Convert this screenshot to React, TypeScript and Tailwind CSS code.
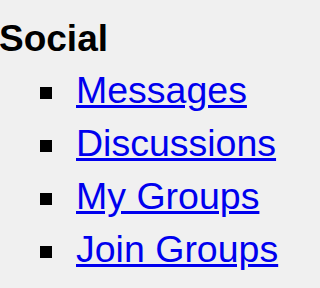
const links = ['Messages', 'Discussions', 'My Groups', 'Join Groups'];

const App = () => {
  return (
    <div className="min-h-[288px] w-full bg-[#f0f0f0] pt-[13px] font-['Liberation_Sans',Arial,sans-serif] text-[37px] text-black">
      <h4 className="-ml-[1px] font-bold leading-[51px]">Social</h4>
      <ul className="pl-[40px]">
        {links.map((label) => (
          <li key={label} className="flex items-start leading-[53px]">
            <span className="mt-[23px] h-[12px] w-[12px] shrink-0 bg-black" />
            <a href="#" className="ml-[24px] text-[37.5px] text-[#0000ee] underline">
              {label}
            </a>
          </li>
        ))}
      </ul>
    </div>
  );
};

export default App;
